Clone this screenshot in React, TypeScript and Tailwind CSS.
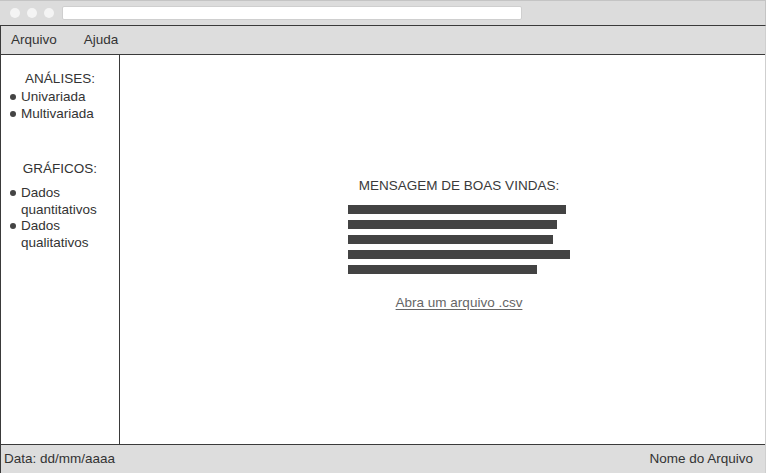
import React from "react";

const Bullet = ({ lines }: { lines: string[] }) => (
  <div className="flex items-start pl-[9px]">
    <span className="mt-[5px] mr-[5px] block h-[6px] w-[6px] shrink-0 rounded-full bg-[#444]" />
    <div className="leading-[16.5px]">
      {lines.map((l) => (
        <div key={l}>{l}</div>
      ))}
    </div>
  </div>
);

export default function App() {
  const bars = [218, 209, 205, 222, 189];
  return (
    <div
      className="flex h-[473px] w-[766px] flex-col overflow-hidden bg-white text-[13.5px] text-[#333]"
      style={{ fontFamily: '"Liberation Sans", Arial, sans-serif' }}
    >
      {/* title bar */}
      <div className="flex h-[26px] shrink-0 items-center border-t border-r border-b border-t-[#c4c4c4] border-r-[#c4c4c4] border-b-[#3a3a3a] bg-[#dcdcdc] pl-[10px]">
        <div className="flex gap-[7px]">
          <span className="block h-[10px] w-[10px] rounded-full bg-[#f4f4f4]" />
          <span className="block h-[10px] w-[10px] rounded-full bg-[#f4f4f4]" />
          <span className="block h-[10px] w-[10px] rounded-full bg-[#f4f4f4]" />
        </div>
        <div className="ml-[8px] h-[14px] w-[460px] rounded-[2px] border border-[#cfcfcf] bg-white" />
      </div>

      <div className="flex min-h-0 flex-1 flex-col border-l border-r border-l-[#3a3a3a] border-r-[#cfcfcf]">
        {/* menu bar */}
        <div className="flex h-[29px] shrink-0 items-center gap-[27px] border-b border-[#3a3a3a] bg-[#dddddd] pl-[10px]">
          <span>Arquivo</span>
          <span>Ajuda</span>
        </div>

        {/* body */}
        <div className="flex min-h-0 flex-1">
          <aside className="w-[119px] shrink-0 border-r border-[#3a3a3a] pt-[16px]">
            <div className="text-center leading-[16px]">ANÁLISES:</div>
            <div className="mt-[2px]">
              <Bullet lines={["Univariada"]} />
              <Bullet lines={["Multivariada"]} />
            </div>
            <div className="mt-[39px] text-center leading-[16px]">GRÁFICOS:</div>
            <div className="mt-[8px]">
              <Bullet lines={["Dados", "quantitativos"]} />
              <Bullet lines={["Dados", "qualitativos"]} />
            </div>
          </aside>

          <main className="flex flex-1 flex-col items-center pt-[123px] pl-[33px]">
            <div className="leading-[16px] text-[#3a3a3a]">MENSAGEM DE BOAS VINDAS:</div>
            <div className="mt-[11px] flex w-[222px] flex-col gap-[6px]">
              {bars.map((w, i) => (
                <div key={i} className="h-[9px] bg-[#434343]" style={{ width: w }} />
              ))}
            </div>
            <a className="mt-[21px] leading-[16px] text-[#666] underline underline-offset-[2px]">
              Abra um arquivo .csv
            </a>
          </main>
        </div>

        {/* footer */}
        <div className="flex h-[29px] shrink-0 items-center justify-between border-t border-[#3a3a3a] bg-[#dddddd] pl-[3px] pr-[12px]">
          <span>Data: dd/mm/aaaa</span>
          <span>Nome do Arquivo</span>
        </div>
      </div>
    </div>
  );
}
